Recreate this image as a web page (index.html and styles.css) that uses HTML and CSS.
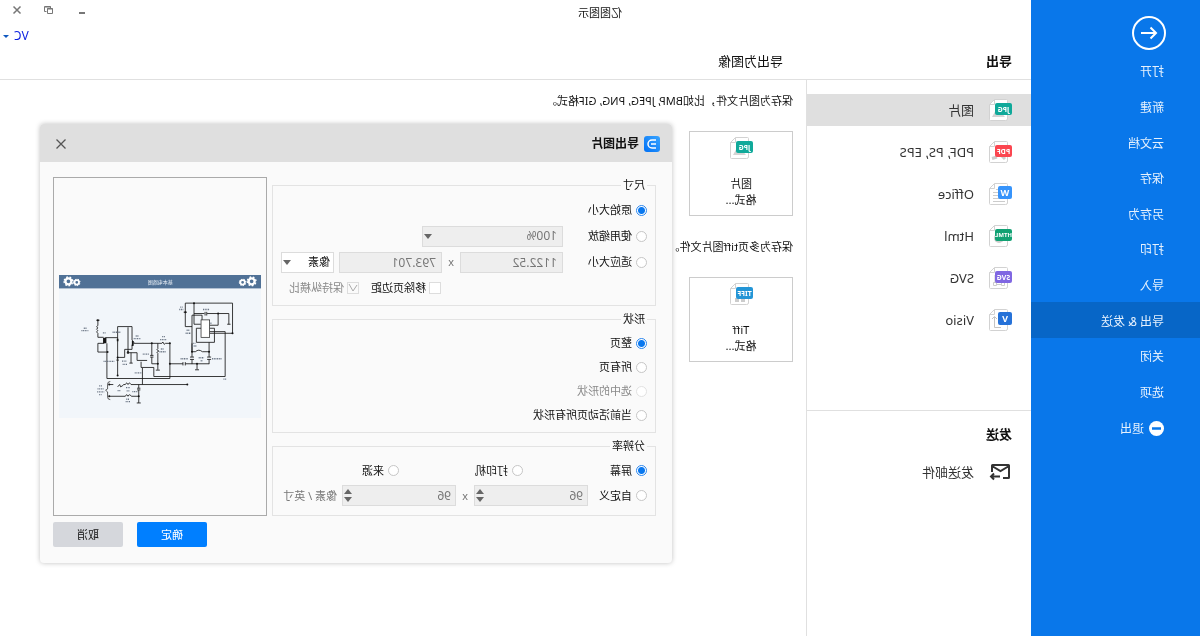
FILE: index.html
```html
<!DOCTYPE html>
<html lang="zh-CN">
<head>
<meta charset="utf-8">
<title>亿图图示</title>
<link rel="stylesheet" href="styles.css">
</head>
<body>
<svg class="defs" aria-hidden="true">
  <defs>
    <g id="doc">
      <path d="M5.500 1.500H17.500L22.500 6.500V21.500Q22.500 22.500 21.500 22.500H6.500Q4.500 22.500 4.500 21V2.500Q4.500 1.500 5.500 1.500Z" fill="#fff" stroke="#d2d2d2"/>
      <path d="M17.500 1.500V6.500H22.500" fill="none" stroke="#d2d2d2"/>
    </g>
    <g id="jpg">
      <use href="#doc"/>
      <path d="M7 19L12 13L15 16L17 13.500L20 19Z" fill="#d4d4d4"/>
      <rect y="5" width="17" height="12" rx="2" fill="#10a99a"/>
      <text class="badge" x="8.500" y="13.500">JPG</text>
    </g>
    <g id="gear">
      <circle r="9" fill="none" stroke="#fff" stroke-width="7"/>
      <circle r="13" fill="none" stroke="#fff" stroke-width="4" stroke-dasharray="5.100 5.110"/>
    </g>
  </defs>
</svg>
<div class="window">
  <header class="titlebar">
    <span class="titlebar-side"></span>
    <h1 class="app-title">亿图图示</h1>
    <div class="titlebar-side window-controls">
      <button class="control" aria-label="最小化"><svg width="10" height="10"><path d="M1 8H7" stroke="#777" stroke-width="2"/></svg></button>
      <button class="control" aria-label="还原"><svg width="10" height="10" fill="none" stroke="#777"><path d="M3.500 3V1.500H9.500V6.500H7.500"/><path d="M1.500 3.500H6.500V8.500H1.500Z" /><path d="M1 4H7M3 2H9"/></svg></button>
      <button class="control" aria-label="关闭"><svg width="10" height="10"><path d="M1.500 1.500L8.500 8.500M8.500 1.500L1.500 8.500" stroke="#777" stroke-width="1.500"/></svg></button>
    </div>
  </header>

  <nav class="sidebar">
    <button class="back" aria-label="返回"><svg width="34" height="34" fill="none" stroke="#fff" stroke-width="2"><circle cx="17" cy="17" r="16"/><path d="M25 17H10M15.500 11.500L10 17L15.500 22.500"/></svg></button>
    <div class="menu">
      <a href="#open">打开</a>
      <a href="#new">新建</a>
      <a href="#cloud">云文档</a>
      <a href="#save">保存</a>
      <a href="#saveas">另存为</a>
      <a href="#print">打印</a>
      <a href="#import">导入</a>
      <a href="#export" class="active">导出 &amp; 发送</a>
      <a href="#close">关闭</a>
      <a href="#options">选项</a>
      <a href="#exit"><svg width="15" height="15"><circle cx="7.500" cy="7.500" r="7.500" fill="#fff"/><path d="M3 7.500H12" stroke="#0977ea" stroke-width="2.500"/></svg>退出</a>
    </div>
  </nav>

  <div class="content">
    <div class="account"><button class="account-button">VC<span class="caret"></span></button></div>
    <div class="headings">
      <h2 class="heading-list">导出</h2>
      <h2 class="heading-detail">导出为图像</h2>
    </div>
    <div class="columns">
      <div class="list">
        <div class="formats">
          <a href="#image" class="format selected"><svg width="24" height="24"><use href="#jpg"/></svg>图片</a>
          <a href="#pdf" class="format"><svg width="24" height="24"><use href="#doc"/><path d="M7 19L10 16M15 17L20 18.500" stroke="#ccc" stroke-width="3"/><rect y="5" width="17" height="12" rx="2" fill="#fb4650"/><text class="badge" x="8.500" y="13.500">PDF</text></svg>PDF, PS, EPS</a>
          <a href="#office" class="format"><svg width="24" height="24"><use href="#doc"/><path d="M7 7.500H16M14 10.500H19M14 13.500H19M7 16.500H19M7 19.500H19" stroke="#ccc"/><rect y="4" width="14" height="13" rx="2" fill="#3794fb"/><text class="letter" x="7" y="14">W</text></svg>Office</a>
          <a href="#html" class="format"><svg width="24" height="24"><use href="#doc"/><circle cx="13" cy="14" r="5" fill="#ccc"/><rect y="5" width="17" height="12" rx="2" fill="#11a173"/><text class="badge narrow" x="8.500" y="13">HTML</text></svg>Html</a>
          <a href="#svg" class="format"><svg width="24" height="24"><use href="#doc"/><path d="M9 9V18M17 9V18M10 18.500H16" stroke="#ccc"/><path d="M7.500 16.500H10.500V19.500H7.500ZM15.500 16.500H18.500V19.500H15.500Z" fill="#fff" stroke="#ccc"/><rect y="5" width="17" height="12" rx="2" fill="#8067e2"/><text class="badge" x="8.500" y="13.500">SVG</text></svg>SVG</a>
          <a href="#visio" class="format"><svg width="24" height="24"><use href="#doc"/><path d="M11 19.500H17.500V9M15 11L17.500 8.500L20 11" fill="none" stroke="#c4c4c4"/><rect y="4" width="14" height="13" rx="2" fill="#2672d8"/><text class="letter" x="7" y="14">V</text></svg>Visio</a>
        </div>
        <div class="send">
          <h2 class="send-title">发送</h2>
          <a href="#mail" class="format"><svg width="24" height="24" fill="none" stroke="#333" stroke-width="2"><path d="M9 18H3.500Q3 18 3 17.500V5.500Q3 5 3.500 5H19.500Q20 5 20 5.500V12M3 6L11.500 11L20 6"/><path d="M12 16.500H21M18 13.500L21 16.500L18 19.500"/></svg>发送邮件</a>
        </div>
      </div>
      <main class="detail">
        <p class="hint">保存为图片文件，比如BMP, JPEG, PNG, GIF格式。</p>
        <button class="card"><svg width="24" height="24"><use href="#jpg"/></svg><span>图片<br>格式...</span></button>
        <p class="hint">保存为多页tiff图片文件。</p>
        <button class="card"><svg width="24" height="24"><use href="#doc"/><path d="M8 18H12M14 18H18M9 8H12" stroke="#ccc" stroke-width="4"/><rect y="5" width="17" height="12" rx="2" fill="#2395d6"/><text class="badge" x="8.500" y="13.500">TIFF</text></svg><span>Tiff<br>格式...</span></button>
      </main>
    </div>
  </div>

  <section class="dialog" role="dialog" aria-labelledby="dialog-title">
    <div class="dialog-bar">
      <svg width="16" height="16"><defs><linearGradient id="logo" x1="0" y1="0" x2="1" y2="1"><stop stop-color="#3aa5ff"/><stop offset="1" stop-color="#0070f5"/></linearGradient></defs><rect width="16" height="16" rx="3" fill="url(#logo)"/><path d="M4 4H8A4 4 0 0 1 8 12H4M4 8H9" fill="none" stroke="#fff" stroke-width="1.500"/></svg>
      <h2 id="dialog-title">导出图片</h2>
      <button class="dialog-close" aria-label="关闭"><svg width="12" height="12"><path d="M1.500 1.500L10.500 10.500M10.500 1.500L1.500 10.500" stroke="#555" stroke-width="1.300"/></svg></button>
    </div>
    <div class="dialog-body">
      <div class="groups">
        <fieldset class="group size-group">
          <legend>尺寸</legend>
          <div class="row"><label class="option"><input type="radio" name="size" checked>原始大小</label></div>
          <div class="row">
            <label class="option first"><input type="radio" name="size">使用缩放</label>
            <select class="field scale" aria-label="缩放" disabled><option>100%</option></select>
          </div>
          <div class="row">
            <label class="option first"><input type="radio" name="size">适应大小</label>
            <input class="field dimension" aria-label="宽度" value="1122.52" disabled>
            <span class="times">x</span>
            <input class="field dimension" aria-label="高度" value="793.701" disabled>
            <select class="field unit" aria-label="单位"><option>像素</option></select>
          </div>
          <div class="row checks">
            <label class="option"><input type="checkbox">移除页边距</label>
            <label class="option muted"><input type="checkbox" checked disabled>保持纵横比</label>
          </div>
        </fieldset>
        <fieldset class="group shape-group">
          <legend>形状</legend>
          <label class="option"><input type="radio" name="shape" checked>整页</label>
          <label class="option"><input type="radio" name="shape">所有页</label>
          <label class="option muted"><input type="radio" name="shape" disabled>选中的形状</label>
          <label class="option"><input type="radio" name="shape">当前活动页所有形状</label>
        </fieldset>
        <fieldset class="group dpi-group">
          <legend>分辨率</legend>
          <div class="row thirds">
            <label class="option"><input type="radio" name="dpi" checked>屏幕</label>
            <label class="option"><input type="radio" name="dpi">打印机</label>
            <label class="option"><input type="radio" name="dpi">来源</label>
          </div>
          <div class="row">
            <label class="option custom"><input type="radio" name="dpi">自定义</label>
            <span class="spin"><input aria-label="水平分辨率" value="96" disabled><span class="steps"><button class="up" aria-label="增加" disabled></button><button class="down" aria-label="减少" disabled></button></span></span>
            <span class="times">x</span>
            <span class="spin"><input aria-label="垂直分辨率" value="96" disabled><span class="steps"><button class="up" aria-label="增加" disabled></button><button class="down" aria-label="减少" disabled></button></span></span>
            <span class="per">像素 / 英寸</span>
          </div>
        </fieldset>
      </div>
      <div class="side">
        <div class="preview">
          <svg class="diagram" viewBox="0 0 603 428" role="img" aria-label="基本电路图">
            <rect width="603" height="428" fill="#f2f6fa"/>
            <rect width="603" height="40" fill="#507196"/>
            <text class="diagram-title" x="301" y="26">基本电路图</text>
            <use href="#gear" x="28" y="19"/>
            <use href="#gear" transform="translate(55 22) scale(.75)"/>
            <use href="#gear" x="575" y="19"/>
            <use href="#gear" transform="translate(550 22) scale(.75)"/>
            <g transform="matrix(-1 0 0 1 633 -46)" fill="none" stroke="#151515" stroke-width="2.500">
              <path d="M427 200H407V130H548V220H480M433 130V193H453M427 275V166H457V180M433 161H464M472 161H537V193M505 161V196H480M402 157H412M466 156V167M471 156V167M532 193H542"/>
              <path d="M454 205H440V247H494V205H480M478 247V291M478 298V312M480 215H526V349H313V322H279M427 250V291M427 298V312M427 275H437Q447 266 458 275H478M421 291H433M421 298H433M472 291H484M472 298H484"/>
              <path d="M361 311H400M407 311H478M400 306V316M407 306V316M442 311V328M436 329H448M361 250V355H173V276M255 250H337L340 246L344 253L348 250H361"/>
              <path d="M307 250V286M302 286H312M302 291H312M307 291V311H325M325 250V266L322 269L328 273L322 277L325 280V329M319 330H331"/>
              <path d="M141 181H151M146 181V197Q138 200 146 204Q138 208 146 212Q138 216 146 220V232H163M173 276H146V250H165M168 233H205M173 250V276"/>
              <path d="M205 345V200H248V240L255 250M236 202V272M226 268H248V254L255 250M205 292H226V268M232 278H263V301H293M245 278V309M240 309H250M275 305V322H279V373M201 300H209"/>
              <path d="M178 373H192M205 380L211 373L214 380L222 375M222 373H228Q232 364 236 373Q240 364 245 373H413M178 408H228Q232 399 236 408Q240 399 246 408H268M268 373V384M263 384H273M263 389H273M268 389V428M262 428H274"/>
              <path d="M183 364Q175 364 175 372V386L169 390L175 395V410Q175 418 183 418" stroke-width="2"/>
              <rect x="454" y="180" width="25" height="52" fill="#fff" stroke-width="2"/>
              <path d="M164 233V250M169 233V250M205 236V244M250 243V258M236 272V281" stroke-width="5"/>
              <g fill="#151515" stroke="none">
                <circle cx="407" cy="157" r="3"/><circle cx="427" cy="275" r="3"/><circle cx="478" cy="275" r="3"/><circle cx="442" cy="311" r="3"/><circle cx="361" cy="311" r="3"/><circle cx="307" cy="250" r="3"/><circle cx="325" cy="311" r="3"/><circle cx="175" cy="276" r="3"/><circle cx="146" cy="181" r="3"/><circle cx="205" cy="292" r="3"/><circle cx="205" cy="346" r="3"/><circle cx="180" cy="373" r="3"/><circle cx="180" cy="408" r="3"/><circle cx="413" cy="373" r="3"/><circle cx="548" cy="220" r="3"/><circle cx="268" cy="408" r="3"/><circle cx="361" cy="250" r="3"/><circle cx="505" cy="161" r="3"/><circle cx="433" cy="130" r="3"/>
              </g>
              <path d="M104 205H112M97 212H118M161 219H169M190 217H214M163 304H195M259 228H269M253 236H274M338 230H346M332 239H350M334 267H342M330 275H348M280 282H299M218 303H231M220 313H233M256 338H277M392 142H399M389 149H401M460 149H480M411 211H419M408 220H424M431 250H437M427 258H441M393 296H415M447 293H463M453 302H459M487 296H517M521 357H530M150 377H158M145 386H163M144 395H165M150 403H157M205 391H213M230 382H242M232 392H240M231 417H241M229 424H243M249 394H265M482 190H487" stroke="#667180" stroke-width="4" stroke-dasharray="3 2"/>
            </g>
          </svg>
        </div>
        <div class="actions">
          <button class="primary">确定</button>
          <button class="secondary">取消</button>
        </div>
      </div>
    </div>
  </section>
</div>
</body>
</html>
```
FILE: styles.css
```css
* { box-sizing: border-box; }

body {
  margin: 0;
  background: #fff;
  color: #111;
  font: 11px/16px "Noto Sans", "Noto Sans CJK SC", sans-serif;
}

h1, h2, p { margin: 0; font-weight: 400; }
a { color: inherit; text-decoration: none; }
button, input, select { margin: 0; padding: 0; font: inherit; color: inherit; }
button { border: 0; background: none; }
svg { display: block; flex: none; }
.defs { position: absolute; width: 0; height: 0; }

/* The whole interface is drawn right to left as a mirror view. */
.window {
  position: relative;
  display: grid;
  grid-template: 24px 1fr / 169px 1fr;
  min-height: 100vh;
  transform: scaleX(-1);
}

.titlebar {
  grid-area: 1 / 1 / 2 / 3;
  display: flex;
  align-items: center;
  padding-top: 2px;
}
.titlebar-side { flex: 1; padding: 0 12px 6px; }
.app-title { font-size: 11px; }
.window-controls { display: flex; justify-content: flex-end; gap: 22px; }
.control { width: 10px; height: 10px; }

.sidebar {
  grid-area: 1 / 1 / 3 / 2;
  background: #0977ea;
  color: #e6f1fd;
  font-size: 12px;
}
.back { display: block; margin: 16px 0 3px 34px; }
.menu { display: grid; grid-auto-rows: 1fr; height: 392px; }
.menu a { display: flex; align-items: center; gap: 5px; padding: 3px 0 0 36px; }
.menu .active { background: #0766c7; }

.content { grid-area: 2 / 2; display: flex; flex-direction: column; min-width: 0; }
.account { display: flex; justify-content: flex-end; height: 24px; padding-right: 3px; }
.account-button { display: flex; align-items: center; gap: 5px; color: #0a1fe0; font-size: 12px; }
.caret { border: 3px solid transparent; border-top-color: #1058c0; border-bottom: 0; }

.headings { display: flex; height: 32px; border-bottom: 1px solid #e0e0e0; line-height: 27px; }
.headings h2 { font-size: 13px; }
.headings .heading-list { width: 224px; padding-left: 19px; font-weight: 700; }
.heading-detail { padding-left: 24px; }

.columns { flex: 1; display: flex; }
.list { flex: 0 0 225px; border-right: 1px solid #e0e0e0; }
.formats { display: flex; flex-direction: column; gap: 10px; height: 331px; padding-top: 14px; border-bottom: 1px solid #e0e0e0; }
.format { display: flex; align-items: center; gap: 14px; height: 32px; padding-left: 19px; color: #333; font-size: 13px; }
.selected { background: #dfdfdf; }
.badge { fill: #fff; font-size: 7px; font-weight: 700; text-anchor: middle; }
.narrow { font-size: 6px; }
.letter { fill: #fff; font-size: 9px; font-weight: 700; text-anchor: middle; }
.send { padding-top: 15px; }
.send-title { margin-bottom: 14px; padding-left: 19px; font-size: 13px; font-weight: 700; }

.detail { flex: 1; padding: 13px 0 0 13px; }
.hint { margin-bottom: 22px; }
.card {
  display: flex;
  flex-direction: column;
  align-items: center;
  gap: 16px;
  width: 104px;
  height: 85px;
  margin-bottom: 23px;
  padding-top: 4px;
  border: 1px solid #ccc;
}

.dialog {
  position: absolute;
  top: 124px;
  right: 40px;
  left: 528px;
  border-radius: 4px;
  background: #fafafa;
  box-shadow: 0 0 5px rgba(0, 0, 0, .25);
}
.dialog-bar {
  display: flex;
  align-items: center;
  gap: 5px;
  height: 38px;
  padding: 1px 15px 0 12px;
  border-radius: 4px 4px 0 0;
  background: #dfdfdf;
}
.dialog-bar h2 { flex: 1; font-size: 12px; font-weight: 700; }
.dialog-body { display: flex; gap: 5px; padding: 15px 13px 16px 16px; }

.groups { flex: 0 0 384px; display: flex; flex-direction: column; gap: 6px; padding-top: 1px; }
.group { min-width: 0; margin: 0; padding: 0 8px; border: 1px solid #e3e3e3; }
.group legend { margin-bottom: 5px; padding: 0 2px; line-height: 14px; }
.row { display: flex; align-items: center; height: 25px; }
.size-group { height: 128px; }
.size-group .row { height: 26px; }
.shape-group { height: 121px; }
.shape-group .option { height: 24px; }
.dpi-group { height: 77px; }

.option { display: flex; align-items: center; gap: 4px; white-space: nowrap; }
.option input {
  flex: none;
  appearance: none;
  width: 11px;
  height: 11px;
  border: 1px solid #c6c6c6;
  background: #fff;
}
.option input[type="radio"] { border-radius: 50%; }
.option input[type="radio"]:checked {
  border-color: #2a86ee;
  background: radial-gradient(circle, #0a78ef 0 3px, #fff 4px);
}
.option input[type="checkbox"] { width: 12px; height: 12px; border-color: #ddd; }
.option input[type="checkbox"]:checked {
  background: url("data:image/svg+xml,%3Csvg xmlns='http://www.w3.org/2000/svg' width='10' height='10'%3E%3Cpath d='M1 2L5 8L9 1' fill='none' stroke='%23aaa'/%3E%3C/svg%3E") center no-repeat;
}
.muted { color: #8a8a8a; }
.option.muted input[type="radio"] { border-color: #e2e2e2; }
.first { width: 84px; }
.custom { width: 59px; }

.field, .spin {
  height: 21px;
  border: 1px solid #dcdcdc;
  border-radius: 0;
  background: #eee;
  color: #777;
  font-size: 12px;
}
.field { appearance: none; padding-left: 5px; opacity: 1; }
select.field {
  background-image: url("data:image/svg+xml,%3Csvg xmlns='http://www.w3.org/2000/svg' width='8' height='5'%3E%3Cpath d='M0 0H8L4 5Z' fill='%23666'/%3E%3C/svg%3E");
  background-position: right 1px center;
  background-repeat: no-repeat;
}
.scale { width: 141px; }
.dimension { width: 103px; }
.times { flex: none; width: 18px; text-align: center; color: #777; }
select.unit { width: 53px; margin-left: 5px; padding-left: 3px; background-color: #fff; color: #111; font-size: 11px; }
.checks { gap: 12px; padding-left: 206px; }
.checks .option { gap: 3px; }

.thirds .option { flex: 0 1 124px; }
.thirds .option:last-child { flex: 1; }
.spin { display: flex; width: 114px; padding: 0 1px 0 4px; }
.spin input { flex: 1; min-width: 0; border: 0; background: none; }
.steps { display: flex; flex-direction: column; justify-content: space-evenly; }
.up, .down { width: 8px; height: 5px; background: #666; }
.up { clip-path: polygon(50% 0, 100% 100%, 0 100%); }
.down { clip-path: polygon(0 0, 100% 0, 50% 100%); }
.per { margin-left: 5px; white-space: nowrap; color: #777; }

.side { flex: 1; display: flex; flex-direction: column; }
.preview { display: flex; align-items: center; height: 339px; padding: 0 5px; border: 1px solid #aaa; }
.diagram { flex: 1; width: 100%; }
.diagram-title { fill: #e8eef5; font-size: 15px; text-anchor: middle; }
.actions { display: flex; justify-content: flex-end; gap: 14px; padding-top: 6px; }
.actions button { width: 70px; height: 25px; border-radius: 2px; }
.primary { background: #007fff; color: #fff; }
.secondary { background: #d5d7dc; }
```
